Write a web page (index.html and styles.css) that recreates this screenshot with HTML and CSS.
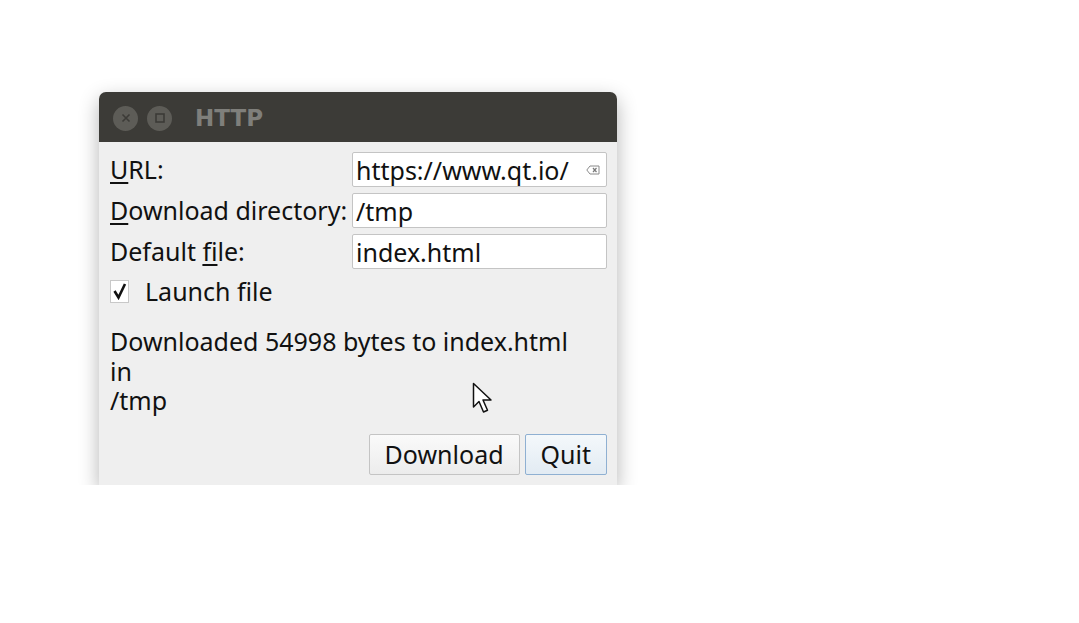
FILE: index.html
```html
<!DOCTYPE html>
<html lang="en">
<head>
    <meta charset="UTF-8">
    <title>HTTP</title>
    <link rel="stylesheet" href="styles.css">
</head>
<body>
    <div class="window">
        <div class="titlebar">
            <span class="wbtn">
                <svg width="12" height="12" viewBox="0 0 12 12"><path d="M2.5 2.5 L9.5 9.5 M9.5 2.5 L2.5 9.5" stroke="#3c3b37" stroke-width="1.6" fill="none"/></svg>
            </span>
            <span class="wbtn">
                <svg width="12" height="12" viewBox="0 0 12 12"><rect x="2" y="2" width="8" height="8" stroke="#3c3b37" stroke-width="1.6" fill="none"/></svg>
            </span>
            <span class="title">HTTP</span>
        </div>

        <div class="content">
            <div class="form">
                <label><u>U</u>RL:</label>
                <div class="field">
                    <span>https://www.qt.io/</span>
                    <svg class="clear" width="14" height="10" viewBox="0 0 14 10">
                        <path d="M4 1 H13 V9 H4 L0.8 5 Z" fill="none" stroke="#8a8a8a" stroke-width="1"/>
                        <path d="M7 3 L10.5 7 M10.5 3 L7 7" stroke="#777" stroke-width="1.2"/>
                    </svg>
                </div>
                <label><u>D</u>ownload directory:</label>
                <div class="field"><span>/tmp</span></div>
                <label>Default <u>f</u>ile:</label>
                <div class="field"><span>index.html</span></div>
            </div>

            <div class="check-row">
                <span class="checkbox">
                    <svg width="16" height="18" viewBox="0 0 16 18"><path d="M2.5 9 L6.5 15.5 L13 2" fill="none" stroke="#111" stroke-width="2.6" stroke-linejoin="miter"/></svg>
                </span>
                <span>Launch file</span>
            </div>

            <p class="status">Downloaded 54998 bytes to index.html<br>in<br>/tmp</p>

            <div class="buttons">
                <button class="button">Download</button>
                <button class="button default">Quit</button>
            </div>

            <svg class="cursor" width="24" height="34" viewBox="0 0 24 34">
                <path d="M1.5 1.5 L1.5 25 L7 19.5 L11.5 30 L15.5 28.3 L11 18 L19 18 Z" fill="#fff" stroke="#111" stroke-width="1.5" stroke-linejoin="round"/>
            </svg>
        </div>
    </div>
</body>
</html>
```

FILE: styles.css
```css
body {
    background-color: #fff;
    margin: 0;
    padding: 0;
    font-family: "Noto Sans", "DejaVu Sans", sans-serif;
    color: #111;
}

.window {
    width: 518px;
    margin: 92px 0 0 99px;
    border-radius: 7px 7px 0 0;
    overflow: hidden;
    box-shadow: 0 7px 20px rgba(0, 0, 0, 0.3);
    background-color: #efefef;
}

.titlebar {
    height: 50px;
    background-color: #3c3b37;
    display: flex;
    align-items: center;
    padding-left: 14px;
}

.wbtn {
    width: 25px;
    height: 25px;
    border-radius: 50%;
    background-color: #5d5c57;
    display: flex;
    align-items: center;
    justify-content: center;
    margin-right: 9px;
    position: relative;
    top: 1px;
}

.title {
    margin-left: 14px;
    font-family: "DejaVu Sans", sans-serif;
    font-weight: bold;
    font-size: 23px;
    color: #7f7f7b;
    position: relative;
    top: 1px;
}

.content {
    position: relative;
    padding: 10px 10px 10px 11px;
    font-size: 25px;
}

.form {
    display: grid;
    grid-template-columns: 242px 1fr;
    row-gap: 6px;
    align-items: center;
}

.form label {
    white-space: nowrap;
    line-height: 30px;
    position: relative;
    top: -1px;
}

.form u {
    text-decoration-thickness: 2px;
    text-underline-offset: 3px;
}

.field {
    height: 33px;
    background-color: #fff;
    border: 1px solid #c4c4c4;
    border-radius: 2px;
    display: flex;
    align-items: center;
    padding: 0 6px 0 3px;
}

.field span {
    flex: 1;
    line-height: 30px;
}

.check-row {
    display: flex;
    align-items: center;
    margin-top: 9px;
    height: 26px;
    line-height: 26px;
}

.checkbox {
    width: 17px;
    height: 21px;
    border: 1px solid #c8c8c8;
    background-color: #fff;
    display: flex;
    align-items: center;
    justify-content: center;
    margin-right: 16px;
}

.status {
    margin: 23px 0 0;
    line-height: 29.5px;
}

.buttons {
    display: flex;
    justify-content: flex-end;
    margin-top: 18px;
}

.button {
    font-family: inherit;
    font-size: 25px;
    color: #111;
    height: 41px;
    padding: 0 15px;
    margin-left: 5px;
    border: 1px solid #c4c4c4;
    border-radius: 2px;
    background: linear-gradient(#fafafa, #ececec);
}

.button.default {
    border-color: #8fb0d2;
    background: linear-gradient(#f4f8fb, #e2ebf3);
}

.cursor {
    position: absolute;
    left: 373px;
    top: 240px;
}
```
